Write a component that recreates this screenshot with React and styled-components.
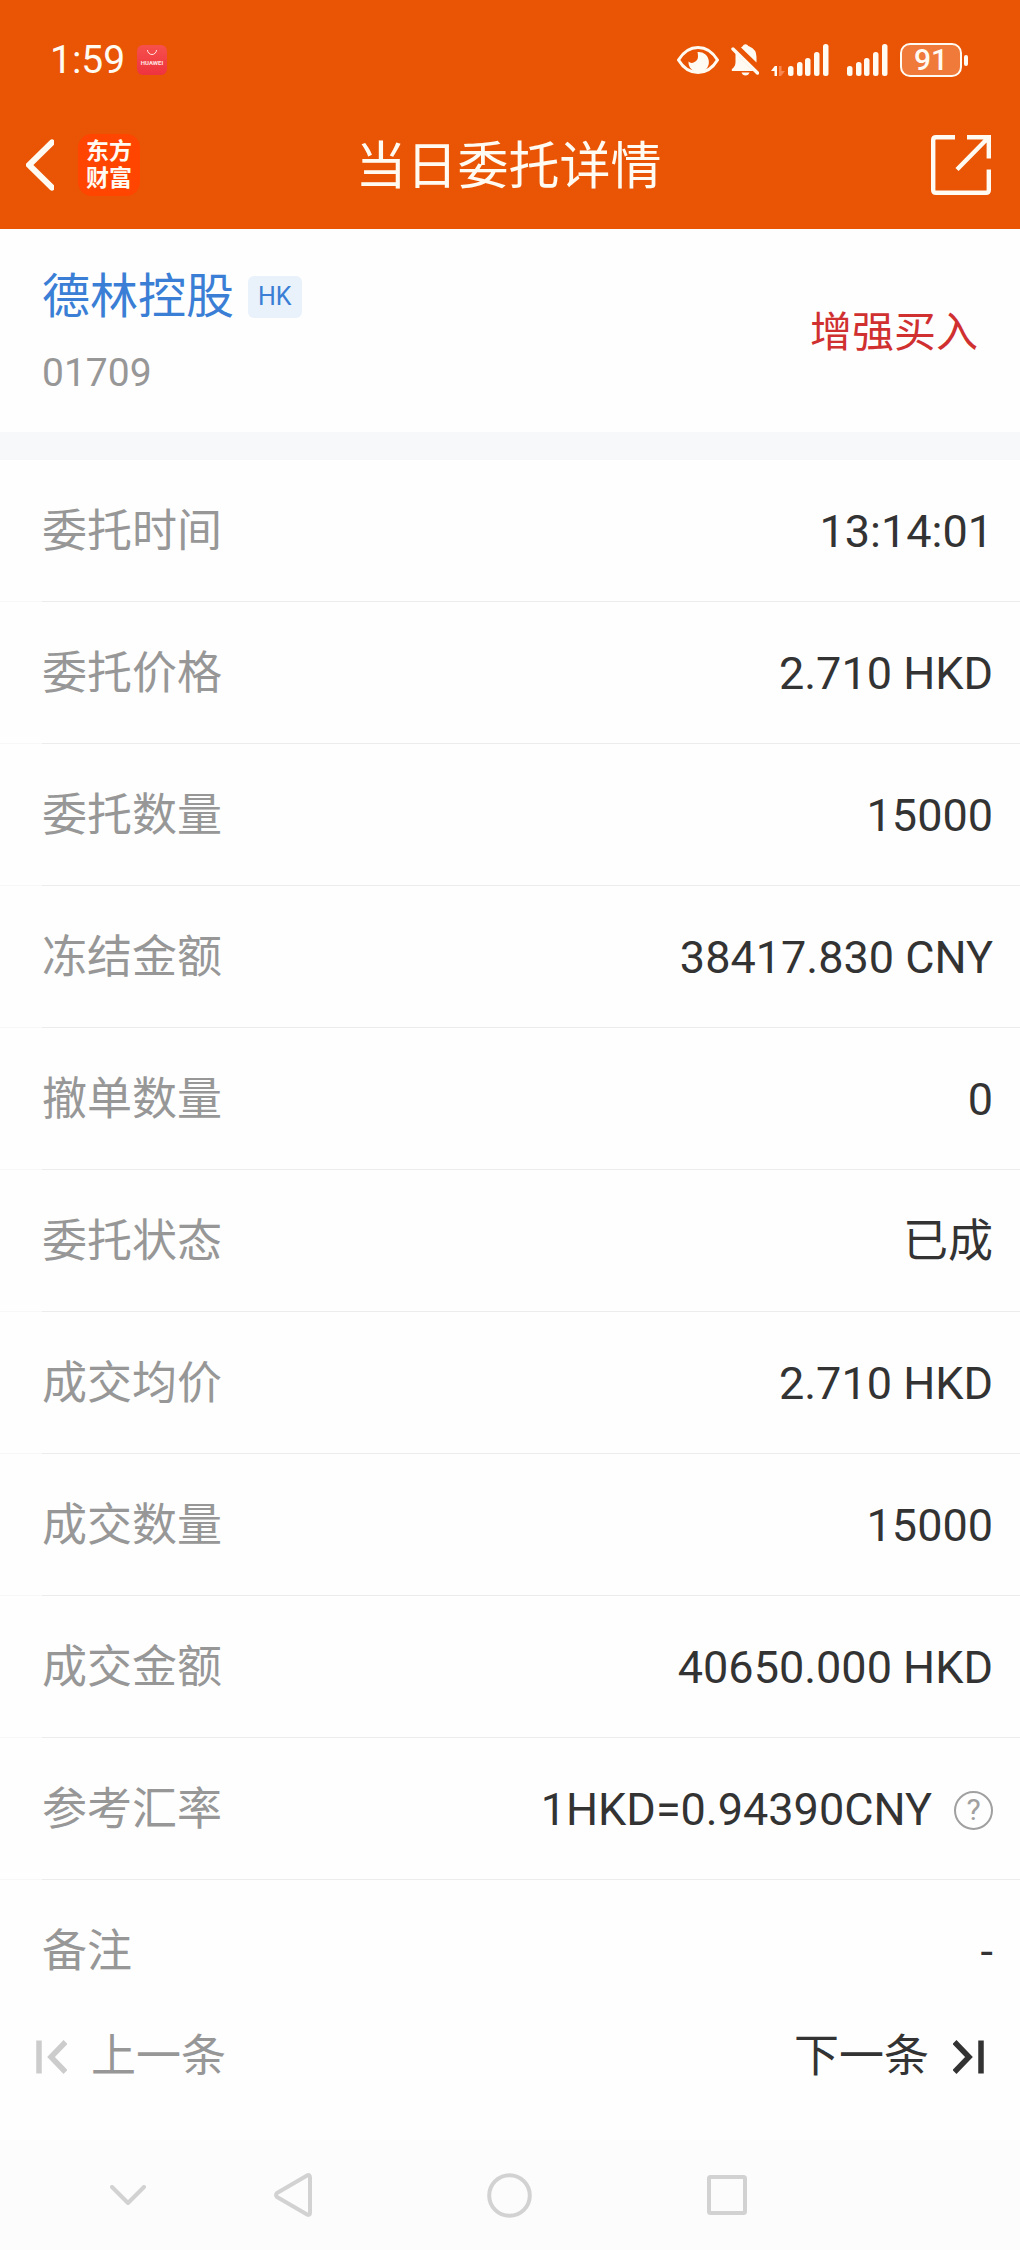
import React from "react";
import styled, { createGlobalStyle } from "styled-components";

const sans = `Roboto, "Noto Sans CJK SC", sans-serif`;
const ink = "#333333";
const muted = "#979797";
const light = "#fffaf2";

const GlobalStyle = createGlobalStyle`
  *, *::before, *::after { box-sizing: border-box; }
  body {
    margin: 0;
    background: #fefefe;
    color: ${ink};
    font-family: ${sans};
    font-weight: 400;
  }
  button { font-family: inherit; font-weight: inherit; }
`;

const Page = styled.div`
  display: flex;
  flex-direction: column;
  min-height: 100vh;
`;

const Header = styled.header`
  background: #e95504;
  color: ${light};
`;

const StatusBar = styled.div`
  display: flex;
  align-items: center;
  justify-content: space-between;
  height: 100px;
  padding: 20px 52px 0 50px;
`;

const StatusGroup = styled.div`
  display: flex;
  align-items: center;
  gap: 12px;
`;

const Clock = styled.span`
  font-size: 39px;
  line-height: 40px;
`;

const Battery = styled.span`
  display: flex;
  align-items: center;
  gap: 2px;
`;

const BatteryBody = styled.span`
  display: flex;
  align-items: center;
  justify-content: center;
  width: 62px;
  height: 34px;
  border: 2px solid ${light};
  border-radius: 10px;
  background: #f07a3a;
  font-size: 30px;
  line-height: 30px;
  font-weight: 500;
`;

const BatteryTip = styled.span`
  width: 4px;
  height: 11px;
  border-radius: 2px;
  background: ${light};
`;

const TitleBar = styled.div`
  display: grid;
  grid-template-columns: 1fr auto 1fr;
  align-items: center;
  height: 129px;
  padding: 0 29px 0 26px;
`;

const BackGroup = styled.div`
  display: flex;
  align-items: center;
  gap: 24px;
`;

const IconButton = styled.button`
  display: flex;
  align-items: center;
  justify-content: center;
  justify-self: ${(p) => p.$align || "center"};
  padding: 0;
  border: 0;
  background: none;
  color: inherit;
  cursor: pointer;
`;

const BrandTile = styled.span`
  display: flex;
  flex-direction: column;
  align-items: center;
  justify-content: center;
  width: 62px;
  height: 62px;
  border-radius: 14px;
  background: #ff4500;
  font-size: 23px;
  line-height: 27px;
  font-weight: 700;
`;

const Title = styled.h1`
  margin: 0;
  padding-top: 4px;
  font-size: 51px;
  line-height: 60px;
  font-weight: 400;
`;

const Stock = styled.section`
  display: flex;
  align-items: center;
  justify-content: space-between;
  padding: 40px 42px 35px;
`;

const StockInfo = styled.div`
  display: flex;
  flex-direction: column;
  gap: 24px;
`;

const StockName = styled.h2`
  display: flex;
  align-items: center;
  gap: 14px;
  margin: 0;
  color: #3a7fd5;
  font-size: 48px;
  line-height: 56px;
  font-weight: 400;
`;

const Market = styled.span`
  padding: 0 10px;
  border-radius: 6px;
  background: #e9f1fb;
  font-size: 25px;
  line-height: 42px;
`;

const Code = styled.span`
  color: ${muted};
  font-size: 39px;
  line-height: 48px;
`;

const Side = styled.strong`
  color: #d03030;
  font-size: 42px;
  line-height: 56px;
  font-weight: 400;
`;

const Band = styled.div`
  height: 28px;
  background: #f6f8fa;
`;

const Details = styled.dl`
  margin: 0;
`;

const Row = styled.div`
  display: flex;
  align-items: center;
  justify-content: space-between;
  height: 142px;
  padding: 2px 27px 0 42px;
  background: linear-gradient(to right, #f7f7f7 42px, #ececec 42px) bottom / 100% 1px no-repeat;

  &:last-child { background: none; }
`;

const Label = styled.dt`
  color: ${muted};
  font-size: 45px;
  line-height: 60px;
`;

const Value = styled.dd`
  display: flex;
  align-items: center;
  gap: 22px;
  margin: 0;
  font-size: 45px;
  line-height: 60px;
`;

const Help = styled.button`
  display: flex;
  align-items: center;
  justify-content: center;
  width: 39px;
  height: 39px;
  padding: 0;
  border: 2px solid #a0a0a0;
  border-radius: 50%;
  background: none;
  color: #a0a0a0;
  font-size: 30px;
  line-height: 34px;
  cursor: pointer;
`;

const Pager = styled.nav`
  display: flex;
  justify-content: space-between;
  padding: 5px 36px 53px;
`;

const PagerButton = styled.button`
  display: flex;
  align-items: center;
  gap: 24px;
  padding: 0;
  border: 0;
  background: none;
  color: ${ink};
  font-size: 45px;
  line-height: 60px;
  cursor: pointer;

  &:disabled { color: ${muted}; }
`;

const SystemNav = styled.footer`
  display: grid;
  grid-template-columns: 164fr 166fr 266fr 170fr;
  align-items: center;
  height: 110px;
  margin-top: auto;
  padding: 0 208px 0 46px;
  background: #fcfcfc;
  color: #d2d2d2;
`;

const rows = [
  { label: "委托时间", value: "13:14:01" },
  { label: "委托价格", value: "2.710 HKD" },
  { label: "委托数量", value: "15000" },
  { label: "冻结金额", value: "38417.830 CNY" },
  { label: "撤单数量", value: "0" },
  { label: "委托状态", value: "已成" },
  { label: "成交均价", value: "2.710 HKD" },
  { label: "成交数量", value: "15000" },
  { label: "成交金额", value: "40650.000 HKD" },
  { label: "参考汇率", value: "1HKD=0.94390CNY", help: true },
  { label: "备注", value: "-" },
];

const StoreIcon = () => (
  <svg width="30" height="30" viewBox="0 0 30 30" role="img" aria-label="HUAWEI">
    <defs>
      <linearGradient id="store" x1="0" y1="0" x2="0" y2="1">
        <stop offset="0" stopColor="#f6504c" />
        <stop offset="1" stopColor="#ee3340" />
      </linearGradient>
    </defs>
    <rect width="30" height="30" rx="6" fill="url(#store)" />
    <path d="M10.500 5a4.500 4.500 0 0 0 9 0" fill="none" stroke="#ffe4e0" strokeWidth="1" />
    <text x="15" y="19.500" textAnchor="middle" fontFamily="Roboto, sans-serif" fontSize="6" fontWeight="700" fill="#ffe4e0">
      HUAWEI
    </text>
  </svg>
);

const EyeIcon = () => (
  <svg width="42" height="28" viewBox="0 0 42 28" aria-hidden="true">
    <path
      d="M1.500 14Q9 1.500 21 1.500T40.500 14Q33 26.500 21 26.500T1.500 14Z"
      fill="none"
      stroke={light}
      strokeWidth="3"
      strokeLinejoin="round"
    />
    <path d="M20.500 6a10.200 10.200 0 1 1-9 9.500q2.500 2.500 6 .5q3.500-2 3.500-5.500q0-2.500-.5-4.500Z" fill={light} />
  </svg>
);

const MutedBellIcon = () => (
  <svg width="28" height="32" viewBox="0 0 28 32" aria-hidden="true">
    <path d="M10 3.500Q12 2 12.500 1Q14.500-.5 16.500 1Q17 2 18.500 2.600Q25.500 5.500 25.500 13V18.500Z" fill={light} />
    <path d="M4.500 9L22.500 27H1Q0 25.500 1.500 24.500Q4.500 22 4.500 18Z" fill={light} />
    <path d="M10.500 28.500h8q-1 3-4 3t-4-3Z" fill={light} />
    <path d="M2 5L26.500 29" stroke={light} strokeWidth="3.400" strokeLinecap="round" />
  </svg>
);

const bars = [
  { x: 0, top: 22 },
  { x: 9, top: 18 },
  { x: 17, top: 14 },
  { x: 26, top: 8 },
  { x: 35, top: 0 },
];

const Bars = () =>
  bars.map((b) => <rect key={b.x} x={b.x} y={b.top} width="5.500" height={32 - b.top} rx="2.500" fill={light} />);

const DataSignalIcon = () => (
  <svg width="64" height="32" viewBox="0 0 64 32" aria-hidden="true">
    <path d="M0 27l3.800-5H6v10H3.500v-5Z" fill={light} />
    <path d="M8 22h2.500v5H14L10 32H8Z" fill="#f9854f" />
    <g transform="translate(17 0)">
      <Bars />
    </g>
  </svg>
);

const SignalIcon = () => (
  <svg width="41" height="32" viewBox="0 0 41 32" aria-hidden="true">
    <Bars />
  </svg>
);

const BackIcon = () => (
  <svg width="28" height="52" viewBox="0 0 28 52" aria-hidden="true">
    <path d="M26 3.500L3 26L26 48.500" fill="none" stroke={light} strokeWidth="6" strokeLinecap="round" />
  </svg>
);

const ShareIcon = () => (
  <svg width="60" height="60" viewBox="0 0 60 60" aria-hidden="true">
    <path
      d="M24 2.200H5Q2.200 2.200 2.200 5V55Q2.200 57.800 5 57.800H55Q57.800 57.800 57.800 55V34.500M36 2.200H57.800V23.500M56 4L26 34.500"
      fill="none"
      stroke={light}
      strokeWidth="4.400"
    />
  </svg>
);

const FirstIcon = () => (
  <svg width="31" height="34" viewBox="0 0 31 34" aria-hidden="true">
    <path d="M3 0.500V33.500M29.500 2L15 17L29.500 32" fill="none" stroke="#cccccc" strokeWidth="5.500" />
  </svg>
);

const LastIcon = () => (
  <svg width="31" height="34" viewBox="0 0 31 34" aria-hidden="true">
    <path d="M28 0.500V33.500M1.500 2L16 17L1.500 32" fill="none" stroke={ink} strokeWidth="5.500" />
  </svg>
);

const HideIcon = () => (
  <svg width="36" height="20" viewBox="0 0 36 20" aria-hidden="true">
    <path d="M2 2L18 18L34 2" fill="none" stroke="currentColor" strokeWidth="4" strokeLinecap="round" strokeLinejoin="round" />
  </svg>
);

const TriangleIcon = () => (
  <svg width="38" height="44" viewBox="0 0 38 44" aria-hidden="true">
    <path
      d="M33.500 2.300Q36 1.500 36 4.500V39.500Q36 42.500 33.500 41.700L3 24Q1 22 3 20Z"
      fill="none"
      stroke="currentColor"
      strokeWidth="4"
      strokeLinejoin="round"
    />
  </svg>
);

const CircleIcon = () => (
  <svg width="45" height="45" viewBox="0 0 45 45" aria-hidden="true">
    <circle cx="22.500" cy="22.500" r="20.300" fill="none" stroke="currentColor" strokeWidth="4" />
  </svg>
);

const SquareIcon = () => (
  <svg width="40" height="40" viewBox="0 0 40 40" aria-hidden="true">
    <rect x="2" y="2" width="36" height="36" rx="1.500" fill="none" stroke="currentColor" strokeWidth="4" />
  </svg>
);

export default function App() {
  return (
    <Page>
      <GlobalStyle />
      <Header>
        <StatusBar>
          <StatusGroup>
            <Clock>1:59</Clock>
            <StoreIcon />
          </StatusGroup>
          <StatusGroup>
            <EyeIcon />
            <MutedBellIcon />
            <DataSignalIcon />
            <SignalIcon />
            <Battery>
              <BatteryBody>91</BatteryBody>
              <BatteryTip />
            </Battery>
          </StatusGroup>
        </StatusBar>
        <TitleBar>
          <BackGroup>
            <IconButton type="button" aria-label="返回">
              <BackIcon />
            </IconButton>
            <BrandTile>
              <span>东方</span>
              <span>财富</span>
            </BrandTile>
          </BackGroup>
          <Title>当日委托详情</Title>
          <IconButton type="button" aria-label="分享" $align="end">
            <ShareIcon />
          </IconButton>
        </TitleBar>
      </Header>

      <main>
        <Stock>
          <StockInfo>
            <StockName>
              德林控股 <Market>HK</Market>
            </StockName>
            <Code>01709</Code>
          </StockInfo>
          <Side>增强买入</Side>
        </Stock>
        <Band />
        <Details>
          {rows.map((row) => (
            <Row key={row.label}>
              <Label>{row.label}</Label>
              <Value>
                {row.value}
                {row.help && (
                  <Help type="button" aria-label="汇率说明">
                    ?
                  </Help>
                )}
              </Value>
            </Row>
          ))}
        </Details>
        <Pager>
          <PagerButton type="button" disabled>
            <FirstIcon />
            上一条
          </PagerButton>
          <PagerButton type="button">
            下一条
            <LastIcon />
          </PagerButton>
        </Pager>
      </main>

      <SystemNav>
        <IconButton type="button" aria-label="收起">
          <HideIcon />
        </IconButton>
        <IconButton type="button" aria-label="后退">
          <TriangleIcon />
        </IconButton>
        <IconButton type="button" aria-label="主屏幕">
          <CircleIcon />
        </IconButton>
        <IconButton type="button" aria-label="最近任务">
          <SquareIcon />
        </IconButton>
      </SystemNav>
    </Page>
  );
}
